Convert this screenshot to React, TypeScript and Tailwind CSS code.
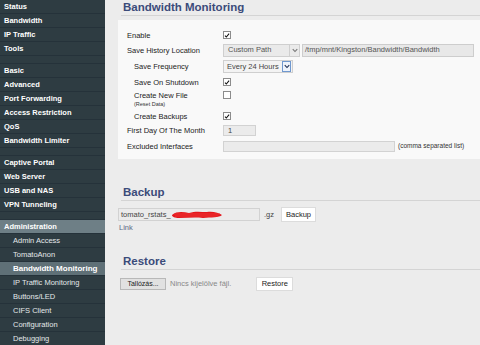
import React from "react";

const FONT = { fontFamily: '"Liberation Sans", Arial, sans-serif' };

const menu: { label: string; gap?: boolean; active?: boolean }[] = [
  { label: "Status" },
  { label: "Bandwidth" },
  { label: "IP Traffic" },
  { label: "Tools" },
  { label: "Basic", gap: true },
  { label: "Advanced" },
  { label: "Port Forwarding" },
  { label: "Access Restriction" },
  { label: "QoS" },
  { label: "Bandwidth Limiter" },
  { label: "Captive Portal", gap: true },
  { label: "Web Server" },
  { label: "USB and NAS" },
  { label: "VPN Tunneling" },
  { label: "Administration", gap: true, active: true },
];

const submenu = [
  "Admin Access",
  "TomatoAnon",
  "Bandwidth Monitoring",
  "IP Traffic Monitoring",
  "Buttons/LED",
  "CIFS Client",
  "Configuration",
  "Debugging",
];

const Check = ({ on }: { on?: boolean }) => (
  <span className="inline-flex w-[8px] h-[8px] items-center justify-center bg-white border border-[#8c8c8c]">
    {on && (
      <svg viewBox="0 0 8 8" className="w-[7px] h-[7px]">
        <path d="M1.3 4.2 L3.1 6 L6.8 1.6" fill="none" stroke="#111" strokeWidth="1.4" />
      </svg>
    )}
  </span>
);

const Chevron = ({ color = "#444" }: { color?: string }) => (
  <svg viewBox="0 0 8 6" className="w-[6px] h-[5px]">
    <path d="M1 1.2 L4 4.4 L7 1.2" fill="none" stroke={color} strokeWidth="1.5" />
  </svg>
);

const Row = ({ label, indent, children, h = "h-[14px]", sub }: { label: string; indent?: boolean; children?: React.ReactNode; h?: string; sub?: string }) => (
  <div className={`flex items-center ${h}`}>
    <div className={`w-[96px] shrink-0 ${indent ? "pl-[7px]" : ""}`}>
      <div className="leading-[9px]">{label}</div>
      {sub && <div className="text-[5.5px] leading-[8px] text-[#333]">{sub}</div>}
    </div>
    <div className="flex items-center gap-[2px]">{children}</div>
  </div>
);

const Heading = ({ children }: { children: React.ReactNode }) => (
  <div className="ml-[3px] pl-[2px] border-b border-[#d4d4d4] text-[11.5px] leading-[14px] font-bold text-[#3b4b7a] pb-[1px]">
    {children}
  </div>
);

export default function App() {
  return (
    <div className="flex w-[480px] h-[345px] overflow-hidden bg-[#ececec]" style={FONT}>
      <nav className="w-[105px] shrink-0 bg-[#2e3c42] text-white">
        {menu.map((m) => (
          <React.Fragment key={m.label}>
            {m.gap && <div className="h-[8px] border-b border-[#25323a]" />}
            <div
              className={`h-[14px] flex items-center pl-[4px] text-[7.5px] font-bold border-b border-[#25323a] ${
                m.active ? "bg-[#6e7f86]" : ""
              }`}
            >
              {m.label}
            </div>
          </React.Fragment>
        ))}
        {submenu.map((s) => (
          <div
            key={s}
            className={`h-[14px] flex items-center pl-[13px] text-[7.5px] border-b border-[#25323a] ${
              s === "Bandwidth Monitoring" ? "bg-[#5f7077] font-bold text-[8px]" : "text-[#e4e8ea]"
            }`}
          >
            {s}
          </div>
        ))}
      </nav>

      <main className="flex-1 pl-[13px] text-[7.5px] text-[#222]">
        <Heading>Bandwidth Monitoring</Heading>

        <div className="mt-[4px] bg-[#f9f9f9] pl-[9px] pt-[8px] pb-[5px]">
          <Row label="Enable">
            <Check on />
          </Row>
          <Row label="Save History Location" h="h-[16px]">
            <div className="flex items-center h-[13px] w-[77px] bg-[#eaeaea] border border-[#cfcfcf]">
              <span className="flex-1 pl-[4px] text-[#555]">Custom Path</span>
              <span className="w-[10px] h-full flex items-center justify-center border-l border-[#cfcfcf]">
                <Chevron color="#777" />
              </span>
            </div>
            <div className="flex items-center h-[13px] w-[172px] bg-[#e8e8e8] border border-[#cdcdcd] pl-[2px] text-[#555]">
              /tmp/mnt/Kingston/Bandwidth/Bandwidth
            </div>
          </Row>
          <Row label="Save Frequency" indent h="h-[17px]">
            <div className="flex items-center h-[13px] w-[70px] bg-[#f3f3f3] border border-[#cfcfcf]">
              <span className="flex-1 pl-[3px] whitespace-nowrap text-[#444]">Every 24 Hours</span>
              <span className="shrink-0 w-[9px] h-[11px] mr-[1px] flex items-center justify-center bg-[#eef3fb] border border-[#6f98cf]">
                <Chevron color="#1d2f55" />
              </span>
            </div>
          </Row>
          <Row label="Save On Shutdown" indent>
            <Check on />
          </Row>
          <Row label="Create New File" indent sub="(Reset Data)" h="h-[20px]">
            <div className="-mt-[4px]">
              <Check />
            </div>
          </Row>
          <Row label="Create Backups" indent>
            <Check on />
          </Row>
          <Row label="First Day Of The Month" h="h-[15px]">
            <div className="flex items-center h-[11px] w-[33px] bg-[#ebebeb] border border-[#d2d2d2] pl-[4px] text-[#444]">1</div>
          </Row>
          <Row label="Excluded Interfaces" h="h-[16px]">
            <div className="h-[11px] w-[172px] bg-[#ebebeb] border border-[#d2d2d2]" />
            <span className="ml-[1px] text-[6.5px] text-[#333]">(comma separated list)</span>
          </Row>
        </div>

        <div className="mt-[26px]">
          <Heading>Backup</Heading>
        </div>
        <div className="mt-[6px] flex items-center gap-[4px]">
          <div className="relative flex items-center h-[13px] w-[142px] bg-[#ebebeb] border border-[#d2d2d2] pl-[2px] text-[#444]">
            tomato_rstats_
            <svg viewBox="0 0 52 9" className="w-[52px] h-[9px]">
              <path
                d="M1 5 C6 1 12 2 18 3 C24 1 30 2 36 2 C42 1 48 3 51 5 C48 8 40 7 32 8 C24 7 16 8 8 8 C4 8 1 7 1 5 Z"
                fill="#e4161c"
              />
              <path d="M3 4 L49 4 M4 6 L47 6" stroke="#f03a3a" strokeWidth="0.8" />
            </svg>
          </div>
          <span className="text-[#444]">.gz</span>
          <button className="ml-[3px] h-[15px] px-[4px] bg-white border border-[#dcdcdc] text-[7.5px] text-[#222]">Backup</button>
        </div>
        <div className="ml-[1px] mt-[1px] text-[#5c6a86] leading-[9px]">Link</div>

        <div className="mt-[22px]">
          <Heading>Restore</Heading>
        </div>
        <div className="mt-[7px] flex items-center">
          <button className="ml-[2px] h-[12px] w-[46px] bg-[#e1e1e1] border border-[#b8b8b8] text-[7px] text-[#222]">Tallózás...</button>
          <span className="ml-[4px] text-[#888]">Nincs kijelölve fájl.</span>
          <button className="ml-[25px] h-[14px] w-[37px] bg-white border border-[#dcdcdc] text-[7.5px] text-[#222]">Restore</button>
        </div>
      </main>
    </div>
  );
}
